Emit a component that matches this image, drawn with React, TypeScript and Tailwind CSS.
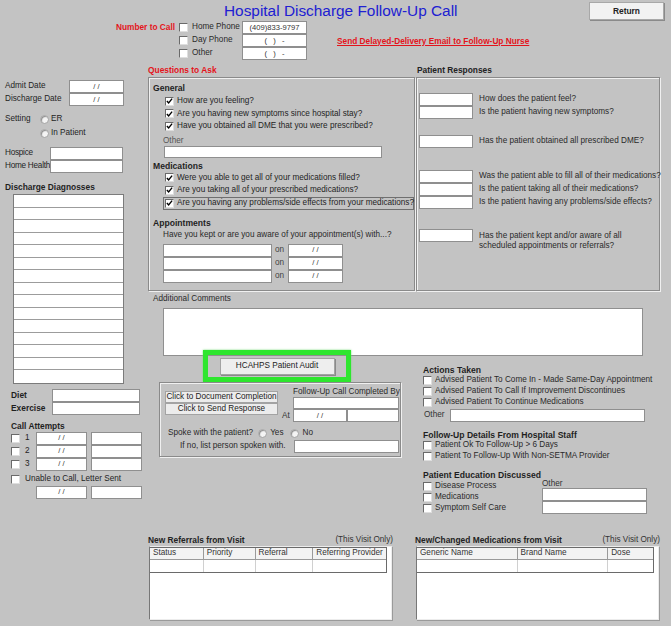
import React from "react";

const RED = "text-[#e3141c]";

function Field({ className = "", children }: { className?: string; children?: React.ReactNode }) {
  return (
    <div
      className={`shrink-0 bg-white border border-[#8f8f8f] flex items-center justify-center text-[7.6px] text-[#333] whitespace-pre ${className}`}
    >
      {children}
    </div>
  );
}

function Check({ checked = false }: { checked?: boolean }) {
  return (
    <span className="shrink-0 w-[9px] h-[9px] bg-white border border-t-[#6a6a6a] border-l-[#6a6a6a] border-r-[#dedede] border-b-[#dedede] flex items-center justify-center">
      {checked && (
        <svg width="8" height="8" viewBox="0 0 8 8">
          <path d="M1 4 L3 6.2 L7 1.3" fill="none" stroke="#000" strokeWidth="1.6" />
        </svg>
      )}
    </span>
  );
}

function Radio() {
  return (
    <span className="block shrink-0 w-[9px] h-[9px] rounded-full bg-[#f4f4f4] border border-[#a3a3a3] shadow-[inset_1px_1px_1px_#8c8c8c]" />
  );
}

function CheckRow({ label, checked = false, className = "" }: { label: string; checked?: boolean; className?: string }) {
  return (
    <div className={`flex items-center ${className}`}>
      <Check checked={checked} />
      <span className="ml-[3px] whitespace-nowrap">{label}</span>
    </div>
  );
}

function ResponseRow({ text, className = "" }: { text: string; className?: string }) {
  return (
    <div className={`flex items-center ${className}`}>
      <Field className="w-[54px] h-[13px]" />
      <span className="ml-[6px] text-[#2a2a2a] whitespace-nowrap">{text}</span>
    </div>
  );
}

function VisitTable({
  title,
  cols,
  className = "",
}: {
  title: string;
  cols: { name: string; w: string }[];
  className?: string;
}) {
  return (
    <div className={`w-[245px] ${className}`}>
      <div className="flex justify-between items-center h-[11px]">
        <span className="font-bold text-[8.4px] text-[#222]">{title}</span>
        <span className="text-[#333]">(This Visit Only)</span>
      </div>
      <div className="ml-[1px] w-[243px] h-[74px] bg-white border border-[#ececec] border-l-[#777] shadow-[1px_1px_0_#9a9a9a]">
        <div className="w-[237px] border-r border-b border-t border-[#6a6a6a]">
          <div className="flex h-[12px] bg-[#f3f3f3] border-b border-[#9a9a9a]">
            {cols.map((c, i) => (
              <div
                key={c.name}
                className={`${c.w} h-full flex items-center pl-[3px] text-[#333] ${i < cols.length - 1 ? "border-r border-[#9a9a9a]" : ""}`}
              >
                {c.name}
              </div>
            ))}
          </div>
          <div className="flex h-[12px]">
            {cols.map((c, i) => (
              <div key={c.name} className={`${c.w} h-full ${i < cols.length - 1 ? "border-r border-[#d0d0d0]" : ""}`} />
            ))}
          </div>
        </div>
      </div>
    </div>
  );
}

const GROOVE = "border border-[#8a8a8a] shadow-[1px_1px_0_#f0f0f0,inset_1px_1px_0_#f0f0f0]";

export default function App() {
  return (
    <div className="w-[671px] h-[626px] overflow-hidden bg-[#c3c3c3] text-[#1f1f1f] text-[8.2px] leading-none font-['Liberation_Sans',Arial,Helvetica,sans-serif]">
      {/* title row */}
      <div className="flex h-[21px] pt-[2px]">
        <h1 className="ml-[224px] text-[15.4px] leading-[17px] text-[#2020d2] whitespace-nowrap">
          Hospital Discharge Follow-Up Call
        </h1>
        <button className="ml-auto mr-[7px] w-[75px] h-[18px] bg-[#f2f2f2] border border-[#a8a8a8] shadow-[1px_1px_0_#8a8a8a] font-bold text-[8.4px] text-[#222]">
          Return
        </button>
      </div>

      {/* number to call */}
      <div className="flex h-[40px]">
        <div className={`ml-[116px] w-[63px] h-[13px] flex items-center font-bold text-[8.3px] ${RED} whitespace-nowrap`}>
          Number to Call
        </div>
        <div className="flex flex-col">
          {[
            ["Home Phone", "(409)833-9797"],
            ["Day Phone", "(   )   -"],
            ["Other", "(   )   -"],
          ].map(([l, v]) => (
            <div key={l} className="flex items-center h-[13px]">
              <Check />
              <span className="ml-[4px] w-[50px] text-[#2a2a2a]">{l}</span>
              <Field className="w-[65px] h-[13px]">{v}</Field>
            </div>
          ))}
        </div>
        <a className={`ml-[30px] self-center font-bold underline text-[8.3px] ${RED} whitespace-nowrap`}>
          Send Delayed-Delivery Email to Follow-Up Nurse
        </a>
      </div>

      <div className="flex mt-[5px]">
        {/* left column */}
        <div className="w-[148px] shrink-0 pt-[14px]">
          {["Admit Date", "Discharge Date"].map((l) => (
            <div key={l} className="flex items-center h-[13px]">
              <span className="pl-[5px] w-[69px]">{l}</span>
              <Field className="w-[55px] h-[13px]">/ /</Field>
            </div>
          ))}
          <div className="flex mt-[7px]">
            <span className="pl-[5px] w-[40px] h-[12px] flex items-center">Setting</span>
            <div className="flex flex-col gap-[2px]">
              <div className="flex items-center h-[12px]">
                <Radio />
                <span className="ml-[2px]">ER</span>
              </div>
              <div className="flex items-center h-[12px]">
                <Radio />
                <span className="ml-[2px]">In Patient</span>
              </div>
            </div>
          </div>
          <div className="mt-[8px]">
            {["Hospice", "Home Health"].map((l) => (
              <div key={l} className="flex items-center h-[13px]">
                <span className="pl-[5px] w-[50px] whitespace-nowrap tracking-[-0.25px]">{l}</span>
                <Field className="w-[73px] h-[13px]" />
              </div>
            ))}
          </div>
          <div className="mt-[8px] pl-[5px] h-[12px] flex items-center font-bold text-[8.4px]">Discharge Diagnosses</div>
          <div className="mt-[1px] ml-[13px] w-[111px] bg-white border border-[#7b7b7b]">
            {Array.from({ length: 15 }).map((_, i) => (
              <div key={i} className={`h-[12.5px] ${i < 14 ? "border-b border-[#9c9c9c]" : ""}`} />
            ))}
          </div>
          <div className="mt-[5px]">
            {["Diet", "Exercise"].map((l) => (
              <div key={l} className="flex items-center h-[13px]">
                <span className="pl-[11px] w-[52px] font-bold text-[8.4px]">{l}</span>
                <Field className="w-[88px] h-[13px]" />
              </div>
            ))}
          </div>
          <div className="mt-[6px] pl-[11px] h-[11px] flex items-center font-bold text-[8.4px]">Call Attempts</div>
          {["1", "2", "3"].map((n) => (
            <div key={n} className="flex items-center h-[13px] pl-[11px]">
              <Check />
              <span className="ml-[5px] w-[11px]">{n}</span>
              <Field className="w-[51px] h-[13px]">/ /</Field>
              <Field className="ml-[4px] w-[51px] h-[13px]" />
            </div>
          ))}
          <div className="mt-[3px] h-[12px] pl-[11px] flex items-center">
            <Check />
            <span className="ml-[5px]">Unable to Call, Letter Sent</span>
          </div>
          <div className="flex ml-[36px]">
            <Field className="w-[51px] h-[13px]">/ /</Field>
            <Field className="ml-[4px] w-[51px] h-[13px]" />
          </div>
        </div>

        {/* right area */}
        <div className="w-[523px]">
          <div className="flex">
            {/* questions */}
            <div className="w-[267px]">
              <div className={`h-[11px] font-bold text-[8.4px] ${RED}`}>Questions to Ask</div>
              <div className={`h-[214px] ${GROOVE}`}>
                <div className="mt-[5px] pl-[4px] h-[10px] flex items-center font-bold text-[8.6px]">General</div>
                <div className="mt-[2px] pl-[16px]">
                  <CheckRow checked className="h-[12.5px]" label="How are you feeling?" />
                  <CheckRow checked className="h-[12.5px]" label="Are you having new symptoms since hospital stay?" />
                  <CheckRow checked className="h-[12.5px]" label="Have you obtained all DME that you were prescribed?" />
                </div>
                <div className="mt-[4px] pl-[14px] h-[9px] flex items-center text-[#555]">Other</div>
                <Field className="ml-[15px] w-[218px] h-[12px]" />
                <div className="mt-[4px] pl-[4px] h-[10px] flex items-center font-bold text-[8.6px]">Medications</div>
                <div className="pl-[16px]">
                  <CheckRow checked className="h-[12.5px]" label="Were you able to get all of your medications filled?" />
                  <CheckRow checked className="h-[12.5px]" label="Are you taking all of your prescribed medications?" />
                </div>
                <div className="ml-[14px] pl-[1px] h-[13px] flex items-center border border-[#6f6f6f]">
                  <Check checked />
                  <span className="ml-[3px] whitespace-nowrap">Are you having any problems/side effects from your medications?</span>
                </div>
                <div className="mt-[9px] pl-[4px] h-[10px] flex items-center font-bold text-[8.6px]">Appointments</div>
                <div className="mt-[2px] pl-[14px] h-[10px] flex items-center text-[#2a2a2a]">
                  Have you kept or are you aware of your appointment(s) with...?
                </div>
                <div className="mt-[3px] pl-[14px]">
                  {[0, 1, 2].map((i) => (
                    <div key={i} className="flex items-center h-[13px]">
                      <Field className="w-[109px] h-[13px]" />
                      <span className="w-[16px] pl-[3px] text-[#444]">on</span>
                      <Field className="w-[55px] h-[13px]">/ /</Field>
                    </div>
                  ))}
                </div>
              </div>
            </div>

            {/* patient responses */}
            <div className="ml-[1px] w-[244px]">
              <div className="h-[11px] pl-[1px] font-bold text-[8.4px] text-[#222]">Patient Responses</div>
              <div className={`h-[214px] pl-[2px] ${GROOVE}`}>
                <ResponseRow className="mt-[15px] h-[13px]" text="How does the patient feel?" />
                <ResponseRow className="h-[13px]" text="Is the patient having new symptoms?" />
                <ResponseRow className="mt-[16px] h-[13px]" text="Has the patient obtained all prescribed DME?" />
                <ResponseRow className="mt-[22px] h-[13px]" text="Was the patient able to fill all of their medications?" />
                <ResponseRow className="h-[13px]" text="Is the patient taking all of their medications?" />
                <ResponseRow className="h-[13px]" text="Is the patient having any problems/side effects?" />
                <div className="mt-[20px] flex items-start">
                  <Field className="w-[54px] h-[13px]" />
                  <span className="ml-[6px] mt-[2px] text-[#2a2a2a] leading-[10px] whitespace-nowrap">
                    Has the patient kept and/or aware of all
                    <br />
                    scheduled appointments or referrals?
                  </span>
                </div>
              </div>
            </div>
          </div>

          {/* additional comments */}
          <div className="mt-[3px] pl-[5px] h-[10px] flex items-center text-[#2a2a2a]">Additional Comments</div>
          <Field className="mt-[4px] ml-[15px] w-[480px] h-[48px]" />

          {/* lower area */}
          <div className="flex items-start">
            <div className="w-[274px] shrink-0">
              <div className="mt-[-6px] ml-[55px] w-[148px] h-[32px] border-[5px] border-[#2ee62e] shadow-[0_0_2px_#7bd87b] flex items-center justify-center">
                <button className="w-[115px] h-[17px] bg-[#eeeeee] border border-[#a3a3a3] shadow-[1px_1px_0_#8a8a8a] text-[8.2px] text-[#222]">
                  HCAHPS Patient Audit
                </button>
              </div>
              <div className={`ml-[11px] w-[242px] h-[75px] ${GROOVE}`}>
                <div className="flex">
                  <div className="ml-[5px] mt-[8px] w-[113px]">
                    <button className="w-full h-[12px] bg-[#ececec] border border-[#a3a3a3] text-[#222]">
                      Click to Document Completion
                    </button>
                    <button className="w-full h-[12px] bg-[#ececec] border border-[#a3a3a3] text-[#222]">
                      Click to Send Response
                    </button>
                  </div>
                  <span className="ml-[4px] w-[11px] self-end mb-[2px] text-[#333]">At</span>
                  <div>
                    <div className="mt-[5px] h-[9px] flex items-center whitespace-nowrap text-[#2a2a2a]">
                      Follow-Up Call Completed By
                    </div>
                    <Field className="w-[106px] h-[12px]" />
                    <div className="flex">
                      <Field className="w-[54px] h-[13px]">/ /</Field>
                      <Field className="w-[52px] h-[13px]" />
                    </div>
                  </div>
                </div>
                <div className="mt-[6px] pl-[8px] h-[10px] flex items-center text-[#2a2a2a]">
                  <span>Spoke with the patient?</span>
                  <span className="ml-[5px]"><Radio /></span>
                  <span className="ml-[3px]">Yes</span>
                  <span className="ml-[7px]"><Radio /></span>
                  <span className="ml-[3px]">No</span>
                </div>
                <div className="mt-[2px] h-[13px] flex items-center">
                  <span className="pl-[20px] w-[134px] text-[#2a2a2a] whitespace-nowrap">If no, list person spoken with.</span>
                  <Field className="w-[105px] h-[13px]" />
                </div>
              </div>
            </div>

            <div className="w-[249px]">
              <div className="mt-[9px] pl-[1px] h-[10px] flex items-center font-bold text-[8.6px]">Actions Taken</div>
              <div className="pl-[1px] text-[#2a2a2a]">
                <CheckRow className="h-[11px]" label="Advised Patient To Come In - Made Same-Day Appointment" />
                <CheckRow className="h-[11px]" label="Advised Patient To Call If Improvement Discontinues" />
                <CheckRow className="h-[11px]" label="Advised Patient To Continue Medications" />
              </div>
              <div className="mt-[1px] h-[13px] flex items-center">
                <span className="pl-[2px] w-[28px] text-[#333]">Other</span>
                <Field className="w-[195px] h-[13px]" />
              </div>
              <div className="mt-[8px] pl-[1px] h-[10px] flex items-center font-bold text-[8.6px]">
                Follow-Up Details From Hospital Staff
              </div>
              <div className="pl-[1px] text-[#2a2a2a]">
                <CheckRow className="h-[11px]" label="Patient Ok To Follow-Up > 6 Days" />
                <CheckRow className="h-[11px]" label="Patient To Follow-Up With Non-SETMA Provider" />
              </div>
              <div className="mt-[8px] pl-[1px] h-[10px] flex items-center font-bold text-[8.6px]">
                Patient Education Discussed
              </div>
              <div className="flex">
                <div className="w-[120px] pl-[1px] mt-[1px] text-[#2a2a2a]">
                  <CheckRow className="h-[11px]" label="Disease Process" />
                  <CheckRow className="h-[11px]" label="Medications" />
                  <CheckRow className="h-[11px]" label="Symptom Self Care" />
                </div>
                <div>
                  <div className="h-[8px] flex items-center text-[#333]">Other</div>
                  <Field className="w-[105px] h-[13px]" />
                  <Field className="w-[105px] h-[13px]" />
                </div>
              </div>
            </div>
          </div>

          {/* visit tables */}
          <div className="flex mt-[21px]">
            <VisitTable
              title="New Referrals from Visit"
              cols={[
                { name: "Status", w: "w-[54px]" },
                { name: "Priority", w: "w-[52px]" },
                { name: "Referral", w: "w-[58px]" },
                { name: "Referring Provider", w: "w-[73px]" },
              ]}
            />
            <VisitTable
              className="ml-[22px]"
              title="New/Changed Medications from Visit"
              cols={[
                { name: "Generic Name", w: "w-[101px]" },
                { name: "Brand Name", w: "w-[91px]" },
                { name: "Dose", w: "w-[45px]" },
              ]}
            />
          </div>
        </div>
      </div>
    </div>
  );
}
